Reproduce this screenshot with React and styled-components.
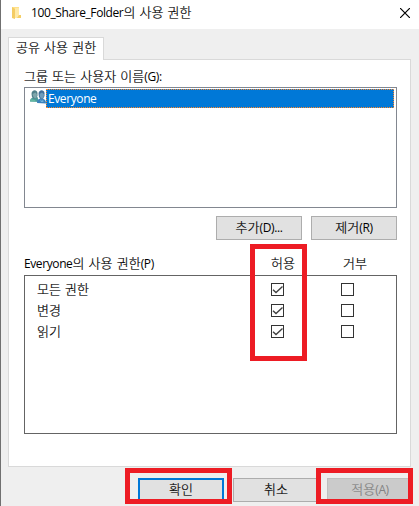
import React from "react";
import styled, { createGlobalStyle, css } from "styled-components";

const GlobalStyle = createGlobalStyle`
  *, *::before, *::after { box-sizing: border-box; }
  html, body { margin: 0; padding: 0; overflow: hidden; }
`;

const Dialog = styled.div`
  position: relative;
  display: flex;
  flex-direction: column;
  width: 419px;
  height: 506px;
  overflow: hidden;
  border-left: 1px solid #707070;
  background: #efefef;
  color: #000;
  font-family: "Open Sans", "Noto Sans CJK KR", sans-serif;
  font-size: 12px;
  line-height: 18px;
  white-space: nowrap;
`;

const Latin = styled.span`
  letter-spacing: -0.4px;
`;

const Hangul = styled.span`
  font-size: 13px;
  font-weight: 300;
  line-height: 1;
  letter-spacing: 0.04px;
  word-spacing: 0.7px;
  -webkit-text-stroke: 0.2px currentColor;
`;

const TitleBar = styled.header`
  display: flex;
  flex: none;
  align-items: center;
  height: 29px;
  padding: 0 8px 3px 10px;
  background: #fff;
`;

const Title = styled.h1`
  flex: 1;
  margin: 0 0 0 7px;
  font-size: 12px;
  font-weight: 400;
`;

const CloseButton = styled.button`
  display: flex;
  padding: 0;
  margin-right: 1px;
  border: 0;
  background: none;
`;

const TabStrip = styled.nav`
  display: flex;
  flex: none;
  height: 31px;
  padding: 8px 0 0 7px;
`;

const Tab = styled.div`
  z-index: 1;
  width: 96px;
  height: 23px;
  padding: 1px 0 0 7px;
  border: 1px solid #d9d9d9;
  border-bottom: 0;
  background: #fff;
`;

const Panel = styled.main`
  display: flex;
  flex: none;
  flex-direction: column;
  width: 403px;
  height: 408px;
  margin: -1px 0 0 7px;
  padding: 8px 13px 0 15px;
  border: 1px solid #d9d9d9;
  background: #fff;
`;

const Label = styled.div`
  height: 18px;
`;

const UserList = styled.div`
  flex: none;
  height: 121px;
  margin-top: 1px;
  padding: 1px;
  border: 1px solid #828790;
`;

const UserRow = styled.div`
  display: flex;
  height: 19px;
  padding: 0 1px 0 4px;
`;

const UserName = styled.div`
  flex: 1;
  padding-left: 1px;
  border: 1px dotted #ff8728;
  background: #0078d7;
  color: #fff;
  line-height: 18px;
`;

const ListActions = styled.div`
  display: flex;
  justify-content: flex-end;
  gap: 9px;
  margin-top: 8px;
`;

const Button = styled.button`
  width: 86px;
  height: 24px;
  padding: 0 0 1px;
  border: 1px solid #adadad;
  background: #e1e1e1;
  color: #000;
  font: inherit;
  ${(p) => p.$primary && css`border: 2px solid #0078d7;`}
  &:disabled {
    margin-left: -1px;
    border-color: #bfbfbf;
    background: #cbcbcb;
    color: #838383;
  }
`;

const PermissionHeader = styled.div`
  display: grid;
  grid-template-columns: 225px 69px 1fr;
  align-items: center;
  height: 18px;
  margin: 15px 0 2px;
`;

const HeaderCell = styled.div`
  padding-left: ${(p) => p.$inset}px;
`;

const PermissionBox = styled.div`
  height: 159px;
  padding-top: 3px;
  border: 1px solid #646464;
`;

const PermissionRow = styled.div`
  display: grid;
  grid-template-columns: 234px 70px 1fr;
  align-items: center;
  height: 21px;
  padding-left: 12px;
`;

const CheckBox = styled.span`
  display: block;
  width: 13px;
  height: 13px;
  border: 1px solid #333;
  background: #fff;
  svg { display: block; }
`;

const Footer = styled.footer`
  display: flex;
  flex: none;
  gap: 9px;
  padding: 11px 0 0 137px;
`;

const Highlight = styled.div`
  position: absolute;
  z-index: 2;
  left: ${(p) => p.$left - 1}px;
  top: ${(p) => p.$top}px;
  width: ${(p) => p.$width}px;
  height: ${(p) => p.$height}px;
  border: 5px solid #ed1c24;
  pointer-events: none;
`;

const MixedText = ({ children }) =>
  children
    .split(/([가-힣][가-힣\s]*)/)
    .filter(Boolean)
    .map((run, i) =>
      /[가-힣]/.test(run) ? <Hangul key={i}>{run}</Hangul> : <Latin key={i}>{run}</Latin>
    );

const FolderIcon = () => (
  <svg width="13" height="14" viewBox="0 0 13 14">
    <path d="M1 1h7v8h2v3H1z" fill="#ffe08a" />
    <path d="M4 2h4v7h2v3H4z" fill="#ffe9a6" />
    <path d="M8 9h2v3H6z" fill="#f5cf66" />
    <path d="M1 1l3 2v10l-3-1z" fill="#f4cc63" />
  </svg>
);

const UsersIcon = () => (
  <svg width="16" height="17" viewBox="0 0 16 17">
    <path d="M0 12.5c0-2.500 1-3 2.500-4l5-.5L9 13z" fill="#4b9a99" />
    <path d="M1.500 5c0-4.500 5.500-5 6-1v3L6 9.500H3.500L2 8z" fill="#4f7f8a" />
    <path d="M2.500 5l3-1.500 1.500 2-.5 3L5 9.500 3.500 8z" fill="#7fa6ac" />
    <path d="M0 12.500l1-2.500 4 1 1 1.500z" fill="#64b9a3" />
    <path d="M7 14c0-3 1-3.500 3-4.500h2.500c2.500 1 3.500 2 3.500 5z" fill="#3b82bc" />
    <path d="M8.500 5c0-4.500 5.500-5 6-1v3l-1.500 3h-2.500L9 8z" fill="#416f98" />
    <path d="M9.500 5l2.500-1.500 2 2-.5 3-1.500 1.500-2-2z" fill="#6f9dbb" />
    <path d="M10 10.500l2 1.500 1-1.500.5 2.500H11z" fill="#71b5df" />
  </svg>
);

const CheckMark = () => (
  <svg width="11" height="11" viewBox="0 0 11 11">
    <path d="M1 5.700L4 8.500L10.500 2.500" fill="none" stroke="#404040" strokeWidth="1.4" />
  </svg>
);

const permissions = ["모든 권한", "변경", "읽기"];

export default function App() {
  return (
    <>
      <GlobalStyle />
      <Dialog>
        <TitleBar>
          <FolderIcon />
          <Title><MixedText>100_Share_Folder의 사용 권한</MixedText></Title>
          <CloseButton aria-label="닫기">
            <svg width="10" height="10" viewBox="0 0 10 10">
              <path d="M0 0l10 10M10 0L0 10" stroke="#000" strokeWidth="1.2" />
            </svg>
          </CloseButton>
        </TitleBar>
        <TabStrip>
          <Tab><MixedText>공유 사용 권한</MixedText></Tab>
        </TabStrip>
        <Panel>
          <Label><MixedText>그룹 또는 사용자 이름(G):</MixedText></Label>
          <UserList>
            <UserRow>
              <UsersIcon />
              <UserName><MixedText>Everyone</MixedText></UserName>
            </UserRow>
          </UserList>
          <ListActions>
            <Button><MixedText>추가(D)...</MixedText></Button>
            <Button><MixedText>제거(R)</MixedText></Button>
          </ListActions>
          <PermissionHeader>
            <Label><MixedText>Everyone의 사용 권한(P)</MixedText></Label>
            <HeaderCell $inset={22}><MixedText>허용</MixedText></HeaderCell>
            <HeaderCell $inset={25}><MixedText>거부</MixedText></HeaderCell>
          </PermissionHeader>
          <PermissionBox>
            {permissions.map((name) => (
              <PermissionRow key={name}>
                <Label><MixedText>{name}</MixedText></Label>
                <CheckBox><CheckMark /></CheckBox>
                <CheckBox />
              </PermissionRow>
            ))}
          </PermissionBox>
        </Panel>
        <Footer>
          <Button $primary><MixedText>확인</MixedText></Button>
          <Button><MixedText>취소</MixedText></Button>
          <Button disabled><MixedText>적용(A)</MixedText></Button>
        </Footer>
        <Highlight $left={250} $top={244} $width={57} $height={117} />
        <Highlight $left={125} $top={468} $width={107} $height={36} />
        <Highlight $left={316} $top={468} $width={97} $height={36} />
      </Dialog>
    </>
  );
}
